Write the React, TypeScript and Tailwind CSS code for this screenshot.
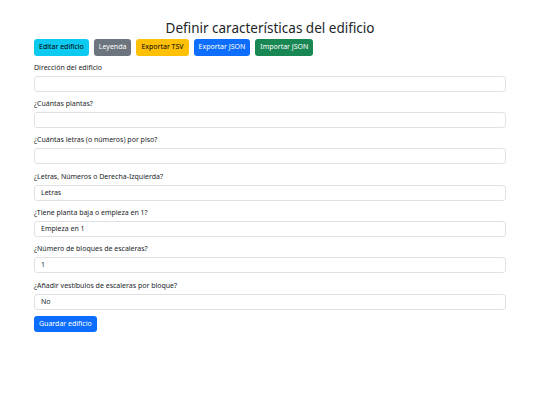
export default function App() {
  const fields: [string, string][] = [
    ["Dirección del edificio", ""],
    ["¿Cuántas plantas?", ""],
    ["¿Cuántas letras (o números) por piso?", ""],
    ["¿Letras, Números o Derecha-Izquierda?", "Letras"],
    ["¿Tiene planta baja o empieza en 1?", "Empieza en 1"],
    ["¿Número de bloques de escaleras?", "1"],
    ["¿Añadir vestíbulos de escaleras por bloque?", "No"],
  ];
  return (
    <div className="w-[540px] h-[405px] bg-white text-[#212529] font-['Noto_Sans','Open_Sans',sans-serif] px-[34px] pt-[18.5px]">
      <h2 className="text-center text-[13.5px] leading-[18px] font-normal">
        Definir características del edificio
      </h2>
      <div className="flex gap-[5px] mt-[2.5px]">
        <button className="h-[17px] px-[5px] text-[7px] rounded-[3px] bg-[#0dcaf0] text-black">Editar edificio</button>
        <button className="h-[17px] px-[5px] text-[7px] rounded-[3px] bg-[#6c757d] text-white">Leyenda</button>
        <button className="h-[17px] px-[5px] text-[7px] rounded-[3px] bg-[#ffc107] text-black">Exportar TSV</button>
        <button className="h-[17px] px-[5px] text-[7px] rounded-[3px] bg-[#0d6efd] text-white">Exportar JSON</button>
        <button className="h-[17px] px-[5px] text-[7px] rounded-[3px] bg-[#198754] text-white">Importar JSON</button>
      </div>
      <div className="flex flex-col mt-[6.8px]">
        {fields.map(([label, value]) => (
          <div key={label} className="flex flex-col mb-[7.33px]">
            <div className="text-[7px] leading-[10px] mb-[3px]">{label}</div>
            <div className="h-[16px] border border-[#dee2e6] rounded-[3px] px-[6px] flex items-center text-[7px]">
              {value}
            </div>
          </div>
        ))}
      </div>
      <div className="flex -mt-[1px]">
        <button className="h-[16px] px-[5px] text-[7px] rounded-[3px] bg-[#0d6efd] text-white">Guardar edificio</button>
      </div>
    </div>
  );
}
